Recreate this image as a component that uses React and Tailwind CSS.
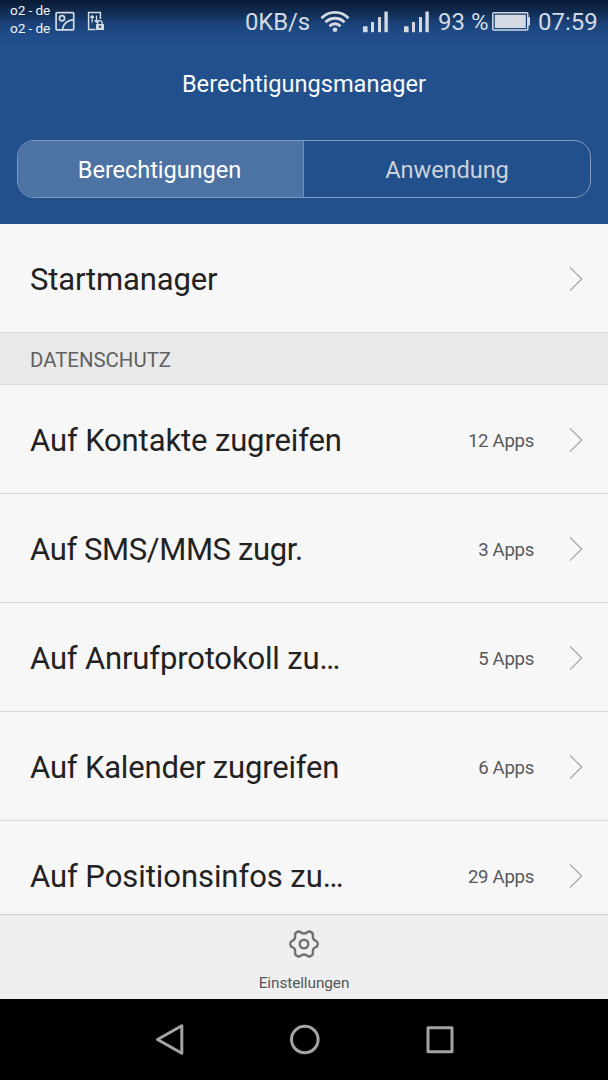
import React from "react";

const permissions = [
  { label: "Auf Kontakte zugreifen", count: "12 Apps", tracking: "tracking-[-0.12px]" },
  { label: "Auf SMS/MMS zugr.", count: "3 Apps", tracking: "tracking-[-0.38px]" },
  { label: "Auf Anrufprotokoll zu…", count: "5 Apps", tracking: "tracking-[-0.16px]" },
  { label: "Auf Kalender zugreifen", count: "6 Apps", tracking: "tracking-[-0.18px]" },
  { label: "Auf Positionsinfos zu…", count: "29 Apps", tracking: "tracking-[-0.06px]" },
];

function Signal({ className }) {
  return (
    <svg className={className} width="26" height="22" viewBox="0 0 26 22" fill="#d3dae3">
      <rect x="0" y="15.3" width="4.6" height="6" rx="0.5" />
      <rect x="8" y="11" width="3" height="10.3" rx="0.5" />
      <rect x="15" y="6" width="3" height="15.3" rx="0.5" />
      <rect x="21.4" y="0.5" width="3.4" height="20.8" rx="0.5" />
    </svg>
  );
}

function StatusBar() {
  return (
    <div className="flex h-11 items-start pl-[10px] text-[#d3dae3]">
      <div className="w-[45px] pt-[1px] text-[13.6px] leading-[18px] tracking-[-0.1px] text-[#f1f4f8]">
        <div>o2 - de</div>
        <div>o2 - de</div>
      </div>
      <svg className="mt-[11px] shrink-0" width="20" height="20" viewBox="0 0 20 20" fill="none" stroke="#d3dae3" strokeWidth="1.7">
        <rect x="1.1" y="1.6" width="17.6" height="17.2" rx="0.8" />
        <circle cx="7" cy="7.3" r="2.6" />
        <path d="M7.5 18.5C8 13.5 12 9.5 18.5 8.6" />
      </svg>
      <svg className="mt-[11px] ml-[12px] shrink-0" width="18" height="20" viewBox="0 0 18 20" fill="none" stroke="#d3dae3" strokeWidth="1.5">
        <path d="M13.4 8V1.6H1.6V18.6H8.5" />
        <path d="M5.2 11.5V5M3.4 6.8L5.2 4.8L7 6.8M9.5 4.5V11M7.7 9.2L9.5 11.2L11.3 9.2" strokeWidth="1.3" />
        <path d="M10.7 13.4V11.8a2.2 2.2 0 0 1 4.4 0V13.4" strokeWidth="1.3" />
        <path fillRule="evenodd" d="M9 13H17V19H9ZM13 14.5a1.2 1.2 0 1 0 .01 0Z" fill="#d3dae3" stroke="none" />
      </svg>
      <div className="ml-[140px] w-[75px] shrink-0 pt-[8px] text-[24px] leading-[28px] tracking-[-0.15px] whitespace-nowrap">0KB/s</div>
      <svg className="mt-[10px] shrink-0" width="30" height="23" viewBox="0 0 30 23" fill="none" stroke="#d3dae3" strokeWidth="2.9">
        <path d="M1.5 8.2C9 .4 21 .4 28.5 8.2" />
        <path d="M5.5 12.3C10.8 6.9 19.2 6.9 24.5 12.3" />
        <path d="M9.5 16.2C12.7 13 17.3 13 20.5 16.2" />
        <circle cx="15" cy="19.7" r="2.3" fill="#d3dae3" stroke="none" />
      </svg>
      <Signal className="mt-[10.5px] ml-[13px] shrink-0" />
      <Signal className="mt-[10.5px] ml-[15px] shrink-0" />
      <div className="ml-[8px] w-[54px] shrink-0 pt-[8px] text-[24px] leading-[28px] whitespace-nowrap">93 %</div>
      <svg className="mt-[11px] shrink-0" width="39" height="21" viewBox="0 0 39 21">
        <rect x="0.8" y="1.8" width="35" height="17.2" rx="1" fill="none" stroke="#d3dae3" strokeWidth="1.5" />
        <rect x="2.8" y="3.7" width="31" height="13.3" fill="#d3dae3" />
        <rect x="36" y="6" width="2" height="8.5" rx="0.5" fill="#d3dae3" />
      </svg>
      <div className="ml-[7px] shrink-0 pt-[8px] text-[24px] leading-[28px] whitespace-nowrap">07:59</div>
    </div>
  );
}

function Chevron() {
  return (
    <svg className="shrink-0" width="14" height="26" viewBox="0 0 14 26" fill="none" stroke="#a3a3a6" strokeWidth="1.2">
      <path d="M1 1.3L12.7 13L1 24.7" />
    </svg>
  );
}

function Row({ label, count, tracking }) {
  return (
    <div className="flex h-[109px] shrink-0 items-center border-b border-[#d9d9dd] pt-[2px] pr-[25px] pl-[30px]">
      <span className={`flex-1 pt-[2px] text-[31px] leading-9 whitespace-nowrap text-[#222222] ${tracking}`}>{label}</span>
      {count && <span className="mr-[35px] pt-[4px] text-[18.6px] tracking-[-0.3px] text-[#58595b]">{count}</span>}
      <Chevron />
    </div>
  );
}

export default function App() {
  return (
    <div className="flex h-[1080px] w-[608px] flex-col overflow-hidden bg-[#f7f7f7] font-[Roboto,sans-serif]">
      <header className="h-[224px] shrink-0 bg-[#21508d] bg-[linear-gradient(#091c34_0px,#0c213e_5px,#122f57_14px,#1a4177_23px,#1f4c88_34px,#21508d_46px)]">
        <StatusBar />
        <h1 className="mt-[26px] text-center text-[23.6px] leading-[28px] text-[#fafbfc]">Berechtigungsmanager</h1>
        <div className="mx-[17px] mt-[42px] flex h-[58px] overflow-hidden rounded-[17px] border border-[#8099bd] text-[23.6px] tracking-[-0.08px]">
          <div className="flex w-[286px] items-center justify-center border-r border-[#7490b8] bg-[#4d73a5] pt-[4px] pr-[2px] text-white">Berechtigungen</div>
          <div className="flex flex-1 items-center justify-center pt-[4px] text-[#cdd2d8]">Anwendung</div>
        </div>
      </header>
      <main className="flex h-[690px] shrink-0 flex-col overflow-hidden">
        <Row label="Startmanager" tracking="tracking-[-0.15px]" />
        <div className="flex h-[52px] shrink-0 items-center border-b border-[#dadada] bg-[#e9e9e9] pt-[3px] pl-[30px] text-[20.4px] text-[#606162]">DATENSCHUTZ</div>
        {permissions.map((item) => (
          <Row key={item.label} {...item} />
        ))}
      </main>
      <footer className="flex h-[85px] shrink-0 flex-col items-center border-t border-[#cfd1d4] bg-[#efefef]">
        <svg className="mt-[14px] shrink-0" width="32" height="30" viewBox="-16 -15 32 30" fill="none" stroke="#707173" strokeWidth="2.4" strokeLinejoin="round">
          <circle r="4.3" />
          <path d="M-3.3 -11.8Q0 -9.2 3.3 -11.8Q5.2 -13.1 7.2 -11.9Q9.3 -10.7 8.9 -8.3Q8.4 -4.3 11.8 -3.2Q13.8 -2.2 13.8 0Q13.8 2.2 11.8 3.2Q8.4 4.3 8.9 8.3Q9.3 10.7 7.2 11.9Q5.2 13.1 3.3 11.8Q0 9.2 -3.3 11.8Q-5.2 13.1 -7.2 11.9Q-9.3 10.7 -8.9 8.3Q-8.4 4.3 -11.8 3.2Q-13.8 2.2 -13.8 0Q-13.8 -2.2 -11.8 -3.2Q-8.4 -4.3 -8.9 -8.3Q-9.3 -10.7 -7.2 -11.9Q-5.2 -13.1 -3.3 -11.8Z" />
        </svg>
        <span className="mt-[14px] text-[15.4px] leading-5 tracking-[-0.1px] text-[#555658]">Einstellungen</span>
      </footer>
      <nav className="flex h-[81px] shrink-0 items-center bg-black pl-[154px]">
        <svg width="32" height="34" viewBox="0 0 32 34" fill="none" stroke="#a4a4a4" strokeWidth="3" strokeLinejoin="round">
          <path d="M3.5 16.5L27.8 2.7V30.3Z" />
        </svg>
        <svg className="ml-[103px]" width="32" height="32" viewBox="0 0 32 32" fill="none" stroke="#a4a4a4" strokeWidth="3">
          <circle cx="15.8" cy="15.5" r="13.3" />
        </svg>
        <svg className="ml-[103px]" width="32" height="32" viewBox="0 0 32 32" fill="none" stroke="#a4a4a4" strokeWidth="3" strokeLinejoin="round">
          <rect x="4" y="3.8" width="24" height="24" />
        </svg>
      </nav>
    </div>
  );
}
